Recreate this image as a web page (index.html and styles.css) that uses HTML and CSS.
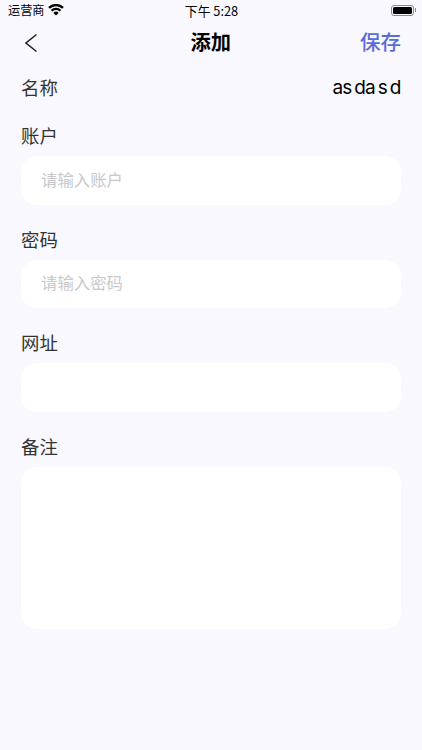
FILE: index.html
```html
<!DOCTYPE html>
<html lang="zh-CN">
<head>
<meta charset="utf-8">
<title>添加</title>
<link rel="stylesheet" href="styles.css">
</head>
<body>
<div class="phone">
  <div class="status">
    <div class="status-left">
      <span>运营商</span>
      <svg class="wifi" width="16" height="12" viewBox="0 0 16 12"><path d="M8 11.6 5.4 8.9a3.6 3.6 0 0 1 5.2 0Z" fill="#000"/><path d="M3.6 6.7a6.2 6.2 0 0 1 8.8 0" fill="none" stroke="#000" stroke-width="2.3"/><path d="M1 3.9a9.9 9.9 0 0 1 14 0" fill="none" stroke="#000" stroke-width="2.3"/></svg>
    </div>
    <div class="status-time">下午 5:28</div>
    <div class="status-right">
      <div class="battery"><div class="battery-fill"></div></div>
      <div class="battery-cap"></div>
    </div>
  </div>
  <div class="nav">
    <svg class="back" width="12" height="20" viewBox="0 0 12 20"><path d="M11.5 1.5 1 10 11.5 18.5" fill="none" stroke="#222" stroke-width="1.5"/></svg>
    <div class="title">添加</div>
    <div class="save">保存</div>
  </div>
  <div class="name-row">
    <span class="label">名称</span>
    <span class="name-value">as da s d</span>
  </div>
  <div class="label field-label">账户</div>
  <div class="input"><span class="placeholder">请输入账户</span></div>
  <div class="label field-label">密码</div>
  <div class="input"><span class="placeholder">请输入密码</span></div>
  <div class="label field-label">网址</div>
  <div class="input"></div>
  <div class="label field-label">备注</div>
  <div class="textarea"></div>
</div>
</body>
</html>
```
FILE: styles.css
```css
* { box-sizing: border-box; }
html, body { margin: 0; padding: 0; }
body {
  width: 422px;
  height: 750px;
  overflow: hidden;
  background: #f8f8fe;
  font-family: "Noto Sans CJK SC", "Liberation Sans", sans-serif;
}
.phone { display: flex; flex-direction: column; padding: 0 21px 0 20.5px; }
.status {
  height: 21px;
  margin: 0 -21px 0 -20.5px;
  padding: 0 6px 1px 7px;
  display: grid;
  grid-template-columns: 1fr auto 1fr;
  align-items: center;
  font-size: 12.8px;
  color: #000;
}
.status-left { display: flex; align-items: center; gap: 5px; font-size: 12.2px; padding-left: 1px; }
.wifi { margin-left: -2px; }
.status-right { display: flex; align-items: center; justify-content: flex-end; }
.battery {
  width: 23px;
  height: 11px;
  border: 1px solid #8a8a8a;
  border-radius: 3px;
  padding: 1px;
}
.battery-fill { width: 100%; height: 100%; background: #000; border-radius: 1.5px; }
.battery-cap { width: 1.5px; height: 4px; background: #8a8a8a; margin-left: 1px; }
.nav {
  height: 44px;
  display: grid;
  grid-template-columns: 1fr auto 1fr;
  align-items: center;
}
.back { margin-left: 4px; }
.title { font-size: 20.3px; font-weight: 700; color: #000; line-height: 28px; padding-bottom: 4px; }
.save { font-size: 20.5px; font-weight: 500; color: #5b6bd8; text-align: right; line-height: 28px; padding-bottom: 4px; }
.name-row {
  height: 44px;
  display: flex;
  justify-content: space-between;
  align-items: center;
  padding: 0 0.5px;
}
.label { font-size: 18.4px; line-height: 26px; color: #333; }
.field-label { margin-top: 22px; margin-bottom: 7px; height: 26px; line-height: 24px; padding-left: 0.5px; }
.name-value { font-family: "Inter", "Liberation Sans", sans-serif; font-size: 19px; letter-spacing: -0.8px; word-spacing: -1.8px; color: #000; }
.name-row + .field-label { margin-top: 14px; }
.input {
  height: 48.6px;
  background: #fff;
  border-radius: 16px;
  padding: 0 0 3px 20.5px;
  display: flex;
  align-items: center;
}
.placeholder { font-size: 16.4px; color: #c8c8cc; }
.textarea { height: 162px; background: #fff; border-radius: 16px; }
```
